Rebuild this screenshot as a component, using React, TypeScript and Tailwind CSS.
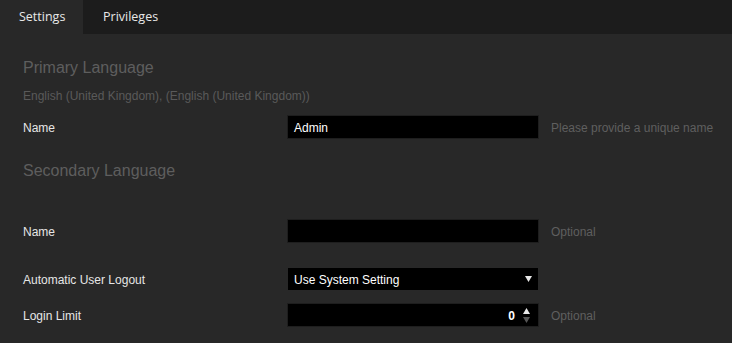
import React from "react";

const labelCls = "w-[264px] shrink-0 pt-[2px] text-[12px] text-[#e6e6e6]";
const hintCls = "ml-3 pt-[2px] text-[12px] text-[#5f5f5f]";

export default function App() {
  return (
    <div className="w-[732px] h-[343px] bg-[#282828] overflow-hidden" style={{ fontFamily: '"Liberation Sans", Arial, sans-serif' }}>
      <div className="flex h-[34px] bg-[#1c1c1c] text-[12.5px] text-[#e8e8e8]" style={{ fontFamily: '"Open Sans", "Noto Sans", sans-serif' }}>
        <div className="flex items-center bg-[#282828] pl-[19px] pr-[18px] w-[83px]">Settings</div>
        <div className="flex items-center pl-[20px]">Privileges</div>
      </div>
      <div className="pl-[23px]">
        <div className="mt-[24px] h-[20px] leading-[20px] text-[16px] text-[#5e5e5e]">Primary Language</div>
        <div className="mt-[11px] h-[14px] leading-[14px] text-[12px] text-[#5a5a5a]">English (United Kingdom), (English (United Kingdom))</div>
        <div className="mt-[12px] flex items-center h-[24px]">
          <div className={labelCls}>Name</div>
          <div className="w-[252px] h-[24px] bg-black border border-[#1e1e1e] flex items-center px-[6px] pt-[1px] text-[12px] text-white">Admin</div>
          <div className={hintCls}>Please provide a unique name</div>
        </div>
        <div className="mt-[22px] h-[20px] leading-[20px] text-[16px] text-[#5e5e5e]">Secondary Language</div>
        <div className="mt-[38px] flex items-center h-[24px]">
          <div className={labelCls}>Name</div>
          <div className="w-[252px] h-[24px] bg-black border border-[#1e1e1e]"></div>
          <div className={hintCls}>Optional</div>
        </div>
        <div className="mt-[24px] flex items-center h-[24px]">
          <div className={labelCls}>Automatic User Logout</div>
          <div className="ml-[1px] w-[250px] h-[22px] bg-black flex items-center justify-between pl-[6px] pr-[6px] text-[12px] text-white">
            <span className="pt-[1px]">Use System Setting</span>
            <svg width="7" height="6" viewBox="0 0 7 6"><path d="M0 0H7L3.5 6Z" fill="#e8e8e8" /></svg>
          </div>
        </div>
        <div className="mt-[12px] flex items-center h-[24px]">
          <div className={labelCls}>Login Limit</div>
          <div className="w-[252px] h-[24px] bg-black border border-[#1e1e1e] flex items-center justify-end pr-[8px] text-[12px] text-white">
            <span className="font-bold mr-[8px] pt-[1px]">0</span>
            <div className="flex flex-col gap-[3px]">
              <svg width="7" height="6" viewBox="0 0 7 6"><path d="M0 6H7L3.5 0Z" fill="#e8e8e8" /></svg>
              <svg width="7" height="6" viewBox="0 0 7 6"><path d="M0 0H7L3.5 6Z" fill="#555" /></svg>
            </div>
          </div>
          <div className={hintCls}>Optional</div>
        </div>
      </div>
    </div>
  );
}
